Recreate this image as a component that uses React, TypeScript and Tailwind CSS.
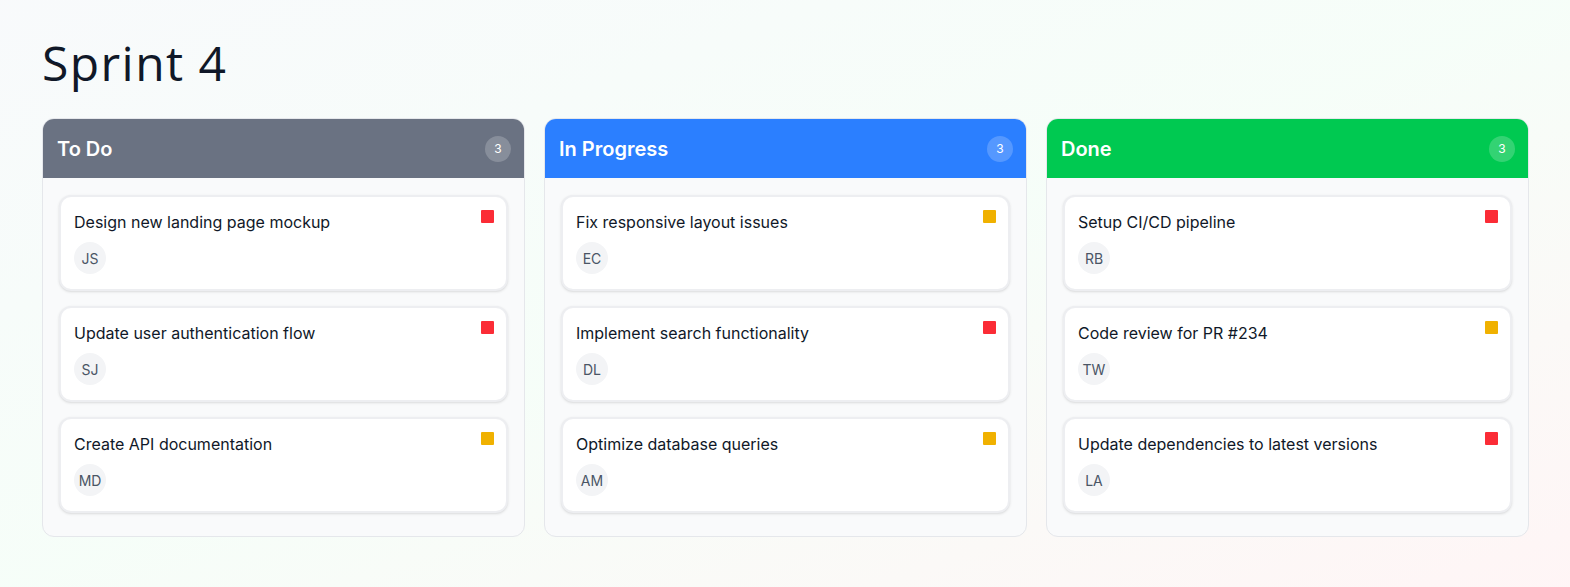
type Priority = "high" | "medium";

interface Task {
  title: string;
  initials: string;
  priority: Priority;
}

interface Column {
  name: string;
  headerClass: string;
  tasks: Task[];
}

const columns: Column[] = [
  {
    name: "To Do",
    headerClass: "bg-gray-500",
    tasks: [
      { title: "Design new landing page mockup", initials: "JS", priority: "high" },
      { title: "Update user authentication flow", initials: "SJ", priority: "high" },
      { title: "Create API documentation", initials: "MD", priority: "medium" },
    ],
  },
  {
    name: "In Progress",
    headerClass: "bg-blue-500",
    tasks: [
      { title: "Fix responsive layout issues", initials: "EC", priority: "medium" },
      { title: "Implement search functionality", initials: "DL", priority: "high" },
      { title: "Optimize database queries", initials: "AM", priority: "medium" },
    ],
  },
  {
    name: "Done",
    headerClass: "bg-green-500",
    tasks: [
      { title: "Setup CI/CD pipeline", initials: "RB", priority: "high" },
      { title: "Code review for PR #234", initials: "TW", priority: "medium" },
      { title: "Update dependencies to latest versions", initials: "LA", priority: "high" },
    ],
  },
];

function TaskCard({ task }: { task: Task }) {
  return (
    <div className="flex items-start justify-between rounded-xl border-2 border-gray-200/70 bg-white pl-[13px] pr-[12px] pt-[14px] pb-[15px] shadow-sm">
      <div className="flex flex-col gap-[9px]">
        <span className="text-[16px] leading-[22px] text-gray-900">{task.title}</span>
        <span className="flex h-8 w-8 items-center justify-center rounded-full bg-gray-100 text-[14px] text-gray-600">
          {task.initials}
        </span>
      </div>
      {/* priority marker */}
      <span
        className={`-mt-px h-[13px] w-[13px] shrink-0 rounded-[1px] ${
          task.priority === "high" ? "bg-red-500" : "bg-yellow-500"
        }`}
      />
    </div>
  );
}

export default function App() {
  return (
    <div className="min-h-[587px] bg-gradient-to-br from-slate-50 via-green-50/60 to-rose-50/70 pl-[42px] pr-[41px] pt-[35px] pb-12 font-['Inter',sans-serif]">
      <h1 className="text-[48px] leading-[56px] font-normal tracking-[0.03em] text-gray-900 font-['Open_Sans','Inter',sans-serif]">
        Sprint 4
      </h1>
      <div className="mt-[27px] grid grid-cols-3 gap-[19px]">
        {columns.map((col) => (
          <div key={col.name} className="overflow-hidden rounded-xl border border-gray-200 bg-gray-50">
            <div className={`flex h-[59px] items-center justify-between pl-[14px] pr-[13px] ${col.headerClass}`}>
              <span className="text-[20px] font-semibold text-white">{col.name}</span>
              <span className="flex h-[26px] w-[26px] items-center justify-center rounded-full bg-white/20 text-[12px] text-white">
                {col.tasks.length}
              </span>
            </div>
            <div className="flex flex-col gap-[15px] px-4 pt-[17px] pb-[23px]">
              {col.tasks.map((t) => (
                <TaskCard key={t.title} task={t} />
              ))}
            </div>
          </div>
        ))}
      </div>
    </div>
  );
}
